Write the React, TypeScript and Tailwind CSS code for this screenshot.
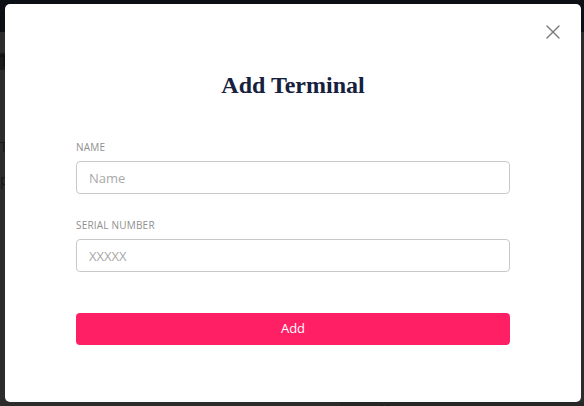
import { X } from 'lucide-react'

const sans = { fontFamily: '"Open Sans", "Liberation Sans", sans-serif' }

const Field = ({ label, placeholder }: { label: string; placeholder: string }) => (
  <div className="flex flex-col">
    <label className="text-[10px] leading-[14px] tracking-[0.02em] text-[#8f8f8f] mb-[7px]">{label}</label>
    <input
      className="h-[33px] w-full rounded-[4px] border border-[#c8c8c8] px-3 text-[13px] text-[#333] placeholder:text-[#a9a9a9] outline-none"
      placeholder={placeholder}
    />
  </div>
)

const App = () => {
  return (
    <div className="relative w-[584px] h-[406px] overflow-hidden bg-[#2c2c2c]" style={sans}>
      {/* page behind the overlay */}
      <div className="h-8 bg-[#0c0f14]" />
      <div className="flex flex-col">
        <div className="mt-[21px] h-[17px] w-[40px] bg-[#1b1b1b] text-[16px] leading-[17px] text-[#111] font-bold">T</div>
        <div className="mt-[69px] text-[14px] text-[#161616] leading-4">Te</div>
        <div className="mt-[17px] text-[14px] text-[#161616] leading-4">p</div>
      </div>
      <div className="absolute left-0 bottom-0 flex h-[4px] w-full">
        <div className="w-[340px] bg-[#2b2b2b]" />
        <div className="flex-1 bg-[#262626] pl-10 text-[14px] leading-4 text-[#0f0f0f]">User</div>
      </div>

      {/* modal */}
      <div className="absolute left-[5px] top-[4px] w-[576px] h-[398px] rounded-[5px] bg-white">
        <button className="absolute right-[16px] top-[16px] text-[#777]" aria-label="Close">
          <X className="w-6 h-6" strokeWidth={1.4} />
        </button>
        <div className="flex flex-col pl-[71px] pr-[71px] pt-[65px]">
          <h2
            className="text-center text-[24px] leading-8 font-bold text-[#15213d]"
            style={{ fontFamily: '"Liberation Serif", "DejaVu Serif", serif' }}
          >
            Add Terminal
          </h2>
          <div className="mt-[39px] flex flex-col gap-6">
            <Field label="NAME" placeholder="Name" />
            <Field label="SERIAL NUMBER" placeholder="XXXXX" />
          </div>
          <button className="mt-[41px] h-8 w-full rounded-[4px] bg-[#fe1f65] text-[13px] text-white">Add</button>
        </div>
      </div>
    </div>
  )
}

export default App
